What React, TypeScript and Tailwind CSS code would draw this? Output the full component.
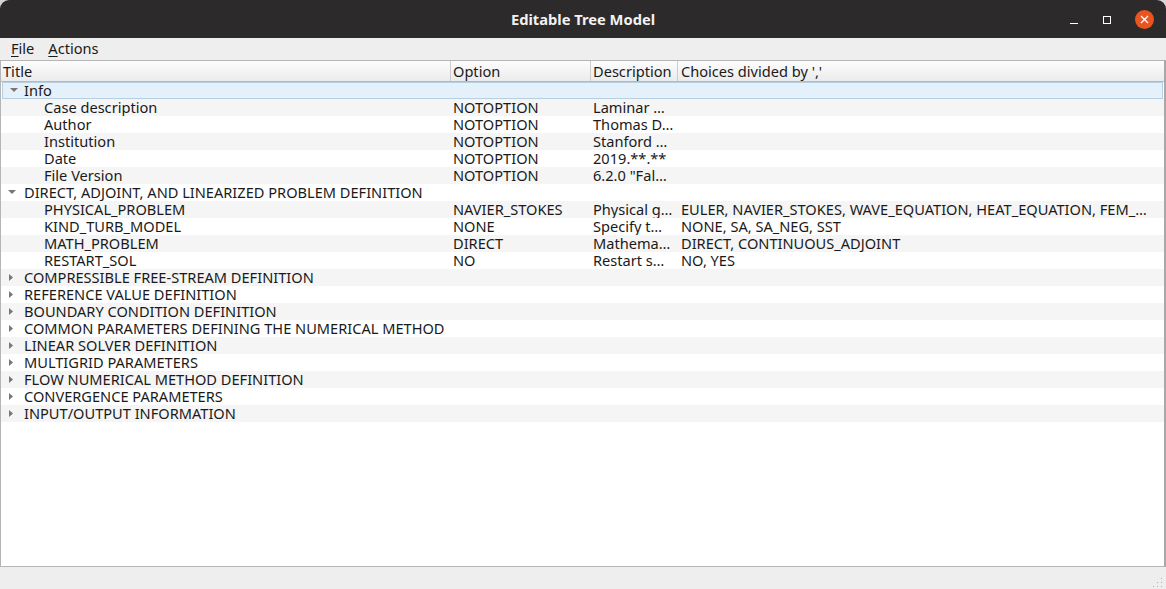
const FONT = { fontFamily: '"Noto Sans", "Open Sans", sans-serif' };

type Row = {
  title: string;
  option?: string;
  desc?: string;
  choices?: string;
  level: 0 | 1;
  arrow?: 'open' | 'closed';
};

const ROWS: Row[] = [
  { title: 'Info', level: 0, arrow: 'open' },
  { title: 'Case description', option: 'NOTOPTION', desc: 'Laminar …', level: 1 },
  { title: 'Author', option: 'NOTOPTION', desc: 'Thomas D…', level: 1 },
  { title: 'Institution', option: 'NOTOPTION', desc: 'Stanford …', level: 1 },
  { title: 'Date', option: 'NOTOPTION', desc: '2019.**.**', level: 1 },
  { title: 'File Version', option: 'NOTOPTION', desc: '6.2.0 "Fal…', level: 1 },
  { title: 'DIRECT, ADJOINT, AND LINEARIZED PROBLEM DEFINITION', level: 0, arrow: 'open' },
  {
    title: 'PHYSICAL_PROBLEM',
    option: 'NAVIER_STOKES',
    desc: 'Physical g…',
    choices: 'EULER, NAVIER_STOKES, WAVE_EQUATION, HEAT_EQUATION, FEM_…',
    level: 1,
  },
  { title: 'KIND_TURB_MODEL', option: 'NONE', desc: 'Specify t…', choices: 'NONE, SA, SA_NEG, SST', level: 1 },
  { title: 'MATH_PROBLEM', option: 'DIRECT', desc: 'Mathema…', choices: 'DIRECT, CONTINUOUS_ADJOINT', level: 1 },
  { title: 'RESTART_SOL', option: 'NO', desc: 'Restart s…', choices: 'NO, YES', level: 1 },
  { title: 'COMPRESSIBLE FREE-STREAM DEFINITION', level: 0, arrow: 'closed' },
  { title: 'REFERENCE VALUE DEFINITION', level: 0, arrow: 'closed' },
  { title: 'BOUNDARY CONDITION DEFINITION', level: 0, arrow: 'closed' },
  { title: 'COMMON PARAMETERS DEFINING THE NUMERICAL METHOD', level: 0, arrow: 'closed' },
  { title: 'LINEAR SOLVER DEFINITION', level: 0, arrow: 'closed' },
  { title: 'MULTIGRID PARAMETERS', level: 0, arrow: 'closed' },
  { title: 'FLOW NUMERICAL METHOD DEFINITION', level: 0, arrow: 'closed' },
  { title: 'CONVERGENCE PARAMETERS', level: 0, arrow: 'closed' },
  { title: 'INPUT/OUTPUT INFORMATION', level: 0, arrow: 'closed' },
];

function Arrow({ kind, top }: { kind: 'open' | 'closed'; top: string }) {
  return kind === 'open' ? (
    <svg width="8" height="5" viewBox="0 0 8 5" className={`absolute left-[7px] ${top}`}>
      <path d="M0 0 H8 L4 4 Z" fill="#777" />
    </svg>
  ) : (
    <svg width="5" height="8" viewBox="0 0 5 8" className="absolute left-[8px] top-[5px]">
      <path d="M0 0 V7 L4 3.5 Z" fill="#777" />
    </svg>
  );
}

export default function App() {
  return (
    <div className="flex h-[589px] w-[1166px] flex-col overflow-hidden bg-[#d6d6d6] text-[#1a1a1a]" style={FONT}>
      {/* title bar */}
      <div className="relative flex h-[38px] shrink-0 items-center justify-center rounded-t-[9px] bg-[#2c2a2a]">
        <span className="text-[14.7px] font-bold text-[#f2f2f2]">Editable Tree Model</span>
        <div className="absolute right-[12px] top-[10px] flex items-center gap-[24px]">
          <div className="flex h-[18px] w-[10px] items-center justify-center">
            <div className="mt-[8px] h-[1.5px] w-[8px] bg-white" />
          </div>
          <div className="h-[8px] w-[8px] border-[1.5px] border-white" />
          <div className="flex h-[19px] w-[19px] items-center justify-center rounded-full bg-[#e95420]">
            <svg width="9" height="9" viewBox="0 0 9 9">
              <path d="M1 1 L8 8 M8 1 L1 8" stroke="white" strokeWidth="1.4" />
            </svg>
          </div>
        </div>
      </div>

      {/* menu bar */}
      <div className="flex h-[22px] shrink-0 items-center gap-[14px] bg-[#eeeeee] pl-[11px] text-[14.6px]">
        <span>
          <span className="underline underline-offset-2">F</span>ile
        </span>
        <span>
          <span className="underline underline-offset-2">A</span>ctions
        </span>
      </div>

      {/* tree */}
      <div className="flex min-h-0 flex-1 flex-col border-y border-l border-r-[2px] border-[#b5b5b5] border-r-[#a8a8a8] bg-white text-[14.6px]">
        <div className="grid h-[21px] shrink-0 grid-cols-[449px_140px_87px_1fr] border-b border-[#b8b8b8] bg-gradient-to-b from-[#fdfdfd] to-[#ebebeb] leading-[20px]">
          <div className="pl-[2px]">Title</div>
          <div className="border-l border-[#cdcdcd] pl-[2px]">Option</div>
          <div className="border-l border-[#cdcdcd] pl-[2px]">Description</div>
          <div className="border-l border-[#cdcdcd] pl-[3px]">Choices divided by ','</div>
        </div>
        {ROWS.map((r, i) => {
          const sel = i === 0;
          return (
            <div
              key={r.title}
              className={
                'relative grid h-[17px] shrink-0 whitespace-nowrap ' +
                (sel
                  ? 'mx-[1px] grid-cols-[446px_140px_87px_1fr] border border-[#b7cfe3] bg-[#e5f1fa] leading-[15px]'
                  : i % 2 === 1
                    ? 'grid-cols-[449px_140px_87px_1fr] bg-[#f5f5f5] leading-[17px]'
                    : 'grid-cols-[449px_140px_87px_1fr] bg-white leading-[17px]')
              }
            >
              {r.arrow && <Arrow kind={r.arrow} top={sel ? 'top-[5px]' : 'top-[6px]'} />}
              <div className={r.level === 0 ? (sel ? 'pl-[21px]' : 'pl-[23px]') : 'pl-[43px]'}>{r.title}</div>
              <div className="pl-[3px]">{r.option}</div>
              <div className="pl-[3px]">{r.desc}</div>
              <div className="pl-[4px]">{r.choices}</div>
            </div>
          );
        })}
      </div>

      {/* status bar */}
      <div className="relative h-[22px] shrink-0 bg-[#eeeeee]">
        <svg width="12" height="12" viewBox="0 0 12 12" className="absolute bottom-[1px] right-[3px]">
          {[
            [10, 2],
            [10, 6],
            [6, 6],
            [10, 10],
            [6, 10],
            [2, 10],
          ].map(([x, y]) => (
            <rect key={`${x}-${y}`} x={x} y={y} width="1" height="1" fill="#b0b0b0" />
          ))}
        </svg>
      </div>
    </div>
  );
}
